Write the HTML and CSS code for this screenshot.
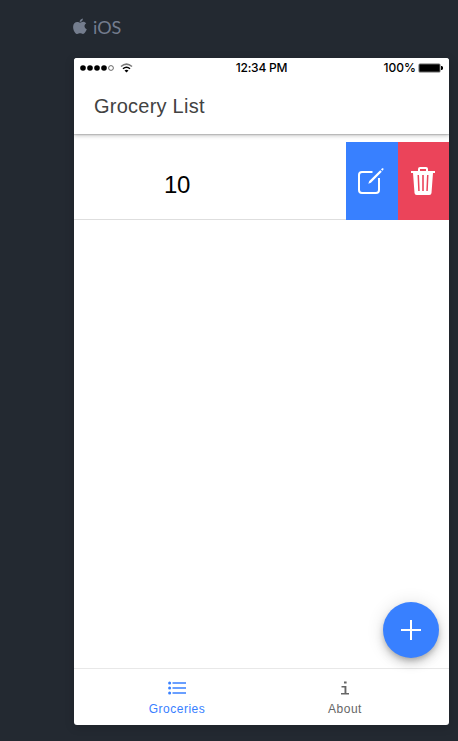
FILE: index.html
```html
<!DOCTYPE html>
<html lang="en">
<head>
<meta charset="utf-8">
<title>Grocery List</title>
<link rel="stylesheet" href="styles.css">
</head>
<body>
<div class="platform">
  <svg class="apple" width="14" height="17" viewBox="0 0 14 17"><path d="M9.900.5c.2 1.800-1.300 3.500-3.200 3.500C6.500 2.200 8 .7 9.900.5zM7 4.700c.8 0 1.700-.9 3.100-.9 1.300 0 2.400.6 3.100 1.500-2.500 1.600-2.100 5 .6 6-.7 2-2.300 4.700-3.800 4.700-1.100 0-1.600-.7-2.900-.7-1.300 0-1.800.7-2.800.7C2.300 16 .1 12.300.1 8.900c0-3.100 2-4.900 4.100-4.900 1.200 0 2.100.7 2.800.7z"/></svg>
  <span>iOS</span>
</div>
<main class="phone">
  <div class="status">
    <svg class="signal" width="54" height="12" viewBox="0 0 54 12">
      <circle cx="3" cy="6" r="2.800"/><circle cx="10" cy="6" r="2.800"/><circle cx="17" cy="6" r="2.800"/><circle cx="24" cy="6" r="2.800"/>
      <circle class="empty" cx="31" cy="6" r="2.400"/>
      <path class="arc faint" d="M41 4.500q5.500-4.800 11 0"/><path class="arc" d="M43 6.800q3.500-3.200 7 0"/><path d="M44.500 8.500q2-1.700 4 0l-2 2z"/>
    </svg>
    <span class="time">12:34 PM</span>
    <span class="power">100%
      <svg width="26" height="10" viewBox="0 0 26 10"><rect class="case" x=".5" y=".5" width="22" height="9" rx="1.500"/><rect x="1.500" y="1.500" width="20" height="7" rx=".5"/><path d="M23 3h1.500v1H25v2h-.5v1H23z"/></svg>
    </span>
  </div>
  <header class="toolbar">Grocery List</header>
  <section class="content">
    <div class="row">
      <div class="item">10</div>
      <button class="action edit" aria-label="Edit">
        <svg width="28" height="28" viewBox="0 0 28 28"><path class="line" d="M15.500 5H5a3 3 0 0 0-3 3v15a3 3 0 0 0 3 3h14a3 3 0 0 0 3-3V11"/><path d="M11.300 16.800l1-2.700L23.200 3.200l1.600 1.600L13.900 15.700zM24 2.400l1.100-1.100q1.300-.5 1.600.8l-1.100 1.700z"/></svg>
      </button>
      <button class="action remove" aria-label="Delete">
        <svg width="26" height="30" viewBox="0 0 26 30"><path fill-rule="evenodd" d="M8 5V3q0-2 2-2h6q2 0 2 2v2h7v2h-2l-1.500 20q-.2 2-2.200 2H6.700q-2 0-2.200-2L3 7H1V5zM10 3v2h6V3zM7.500 9l.7 16h1.500L9 9zM12.200 9v16h1.600V9zM17 9l-.7 16h1.500l.7-16z"/></svg>
      </button>
    </div>
    <button class="fab" aria-label="Add"><svg width="20" height="20" viewBox="0 0 20 20"><path d="M10 0v20M0 10h20"/></svg></button>
  </section>
  <nav class="tabs">
    <a class="tab active"><svg width="18" height="14" viewBox="0 0 18 14"><circle cx="1.600" cy="2" r="1.500"/><circle cx="1.600" cy="7" r="1.500"/><circle cx="1.600" cy="12" r="1.500"/><path d="M4.500 2H18M4.500 7H18M4.500 12H18"/></svg><span>Groceries</span></a>
    <a class="tab"><svg width="10" height="14" viewBox="0 0 10 14"><path class="info" d="M4 .5h2.600v2H4zM1.500 4.900h4.900v7H9v1.500H1v-1.500h3.500V6.400h-3z"/></svg><span>About</span></a>
  </nav>
</main>
</body>
</html>
```
FILE: styles.css
```css
* { box-sizing: border-box; }
body {
  margin: 0;
  height: 741px;
  padding-left: 74px;
  overflow: hidden;
  background: #232931;
  font-family: "Liberation Sans", Arial, sans-serif;
}
button { border: 0; padding: 0; }
svg { display: block; fill: currentColor; }
.platform {
  height: 58px;
  display: flex;
  align-items: center;
  gap: 6px;
  padding-bottom: 4px;
  margin-left: -1px;
  color: #747d8e;
  font: 18px Lato, sans-serif;
}
.apple { margin-bottom: 1px; }
.phone {
  width: 375px;
  height: 667px;
  display: flex;
  flex-direction: column;
  overflow: hidden;
  border-radius: 3px;
  background: #fff;
  box-shadow: 0 2px 10px rgba(0, 0, 0, .18);
}
.status {
  position: relative;
  z-index: 1;
  background: #fff;
  height: 20px;
  flex: none;
  display: grid;
  grid-template-columns: 1fr auto 1fr;
  align-items: center;
  padding: 0 5px 0 6px;
  font: 500 12px/20px Inter, sans-serif;
}
.time { margin-right: 1px; letter-spacing: -.2px; }
.empty { fill: none; stroke: #444; stroke-width: .8; }
.arc { fill: none; stroke: #000; stroke-width: 1.500; }
.faint { stroke: #777; }
.power { display: flex; align-items: center; justify-content: flex-end; gap: 2px; }
.case { fill: #666; }
.toolbar {
  position: relative;
  height: 56px;
  flex: none;
  padding-left: 20px;
  font-size: 20px;
  line-height: 56px;
  letter-spacing: .24px;
  color: #424242;
  box-shadow: 0 1px 1px rgba(0, 0, 0, .14), 0 2px 4px rgba(0, 0, 0, .2);
}
.content { position: relative; flex: 1; padding-top: 8px; }
.row { display: flex; height: 78px; }
.item {
  width: 272px;
  padding-left: 90px;
  border-bottom: 1px solid #dedede;
  font-size: 24px;
  line-height: 86px;
  letter-spacing: -.3px;
  color: #000;
}
.action { width: 51.5px; display: flex; align-items: center; justify-content: center; color: #fff; }
.edit { background: #3880ff; padding-right: 2px; }
.remove { background: #eb445a; }
.line { fill: none; stroke: currentColor; stroke-width: 2; }
.fab {
  position: absolute;
  right: 10px;
  bottom: 10px;
  width: 56px;
  height: 56px;
  border-radius: 50%;
  display: flex;
  align-items: center;
  justify-content: center;
  background: #3880ff;
  color: #fff;
  box-shadow: 0 3px 5px -1px rgba(0, 0, 0, .2), 0 6px 10px rgba(0, 0, 0, .14), 0 1px 18px rgba(0, 0, 0, .12);
}
.fab path { stroke: currentColor; stroke-width: 2; }
.tabs {
  height: 57px;
  flex: none;
  display: flex;
  justify-content: center;
  padding-right: 2px;
  border-top: 1px solid #e8e8e8;
}
.tab {
  width: 168px;
  padding-top: 12px;
  display: flex;
  flex-direction: column;
  align-items: center;
  gap: 7px;
  color: #666;
  font-size: 12px;
  line-height: 14px;
  letter-spacing: .5px;
}
.tab span { padding-left: 1px; }
.active { color: #3880ff; }
.tab path { stroke: currentColor; stroke-width: 1.400; }
.tab .info { stroke: none; }
```
